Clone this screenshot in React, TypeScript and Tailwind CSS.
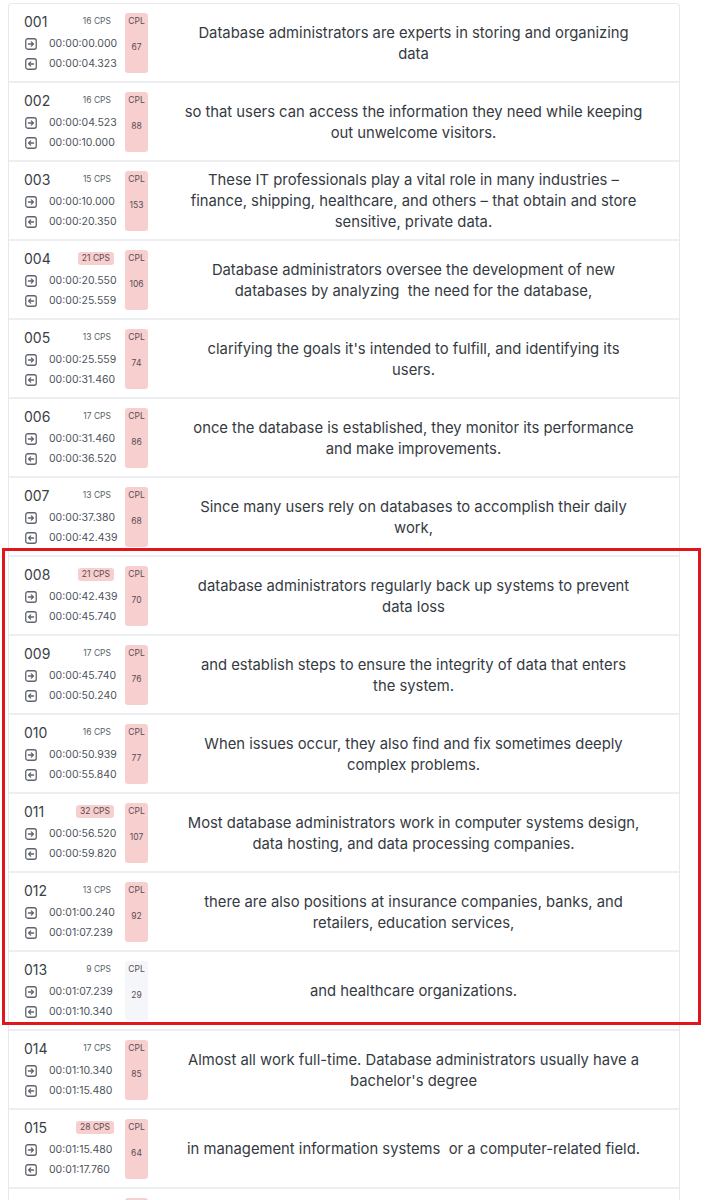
interface Cue {
  id: string
  cps: number
  start: string
  end: string
  cpl: number
  lines: string[]
}

const cues: Cue[] = [
  { id: '001', cps: 16, start: '00:00:00.000', end: '00:00:04.323', cpl: 67, lines: ['Database administrators are experts in storing and organizing', 'data'] },
  { id: '002', cps: 16, start: '00:00:04.523', end: '00:00:10.000', cpl: 88, lines: ['so that users can access the information they need while keeping', 'out unwelcome visitors.'] },
  { id: '003', cps: 15, start: '00:00:10.000', end: '00:00:20.350', cpl: 153, lines: ['These IT professionals play a vital role in many industries –', 'finance, shipping, healthcare, and others – that obtain and store', 'sensitive, private data.'] },
  { id: '004', cps: 21, start: '00:00:20.550', end: '00:00:25.559', cpl: 106, lines: ['Database administrators oversee the development of new', 'databases by analyzing  the need for the database,'] },
  { id: '005', cps: 13, start: '00:00:25.559', end: '00:00:31.460', cpl: 74, lines: ["clarifying the goals it's intended to fulfill, and identifying its", 'users.'] },
  { id: '006', cps: 17, start: '00:00:31.460', end: '00:00:36.520', cpl: 86, lines: ['once the database is established, they monitor its performance', 'and make improvements.'] },
  { id: '007', cps: 13, start: '00:00:37.380', end: '00:00:42.439', cpl: 68, lines: ['Since many users rely on databases to accomplish their daily', 'work,'] },
  { id: '008', cps: 21, start: '00:00:42.439', end: '00:00:45.740', cpl: 70, lines: ['database administrators regularly back up systems to prevent', 'data loss'] },
  { id: '009', cps: 17, start: '00:00:45.740', end: '00:00:50.240', cpl: 76, lines: ['and establish steps to ensure the integrity of data that enters', 'the system.'] },
  { id: '010', cps: 16, start: '00:00:50.939', end: '00:00:55.840', cpl: 77, lines: ['When issues occur, they also find and fix sometimes deeply', 'complex problems.'] },
  { id: '011', cps: 32, start: '00:00:56.520', end: '00:00:59.820', cpl: 107, lines: ['Most database administrators work in computer systems design,', 'data hosting, and data processing companies.'] },
  { id: '012', cps: 13, start: '00:01:00.240', end: '00:01:07.239', cpl: 92, lines: ['there are also positions at insurance companies, banks, and', 'retailers, education services,'] },
  { id: '013', cps: 9, start: '00:01:07.239', end: '00:01:10.340', cpl: 29, lines: ['and healthcare organizations.'] },
  { id: '014', cps: 17, start: '00:01:10.340', end: '00:01:15.480', cpl: 85, lines: ['Almost all work full-time. Database administrators usually have a', "bachelor's degree"] },
  { id: '015', cps: 28, start: '00:01:15.480', end: '00:01:17.760', cpl: 64, lines: ['in management information systems  or a computer-related field.'] },
  { id: '016', cps: 24, start: '00:01:17.760', end: '00:01:21.120', cpl: 81, lines: ['Some employers prefer applicants who have a master’s degree', 'in database administration.'] },
]

// boxed arrow, pointing right (in) or left (out)
function BoxArrow({ dir }: { dir: 'in' | 'out' }) {
  return (
    <svg width="12" height="12" viewBox="0 0 12 12" fill="none" stroke="#5f646c" strokeWidth="1.3" strokeLinecap="round" strokeLinejoin="round" className="shrink-0">
      <rect x="0.75" y="0.75" width="10.5" height="10.5" rx="2" />
      {dir === 'in'
        ? <path d="M3.4 6h5 M6.3 3.9 8.4 6 6.3 8.1" />
        : <path d="M8.6 6h-5 M5.7 3.9 3.6 6l2.1 2.1" />}
    </svg>
  )
}

function CueRow({ cue }: { cue: Cue }) {
  const fastCps = cue.cps > 20
  const longCpl = cue.cpl > 42

  return (
    <div className="flex h-[79px] border-b-2 border-[#eceef1]">
      {/* number, speed, timings */}
      <div className="w-[105px] shrink-0 pl-[15px] pt-[8px]">
        <div className="flex h-[18px] items-center justify-between">
          <span className="text-[14px] text-[#3a3f47]">{cue.id}</span>
          <span
            className={
              fastCps
                ? 'rounded-[3px] bg-[#f7cfcf] px-[4px] py-[1px] text-[8.5px] leading-[11px] text-[#5b4b50]'
                : 'pr-[3px] text-[8.5px] leading-[11px] text-[#5b5f66]'
            }
          >
            {cue.cps} CPS
          </span>
        </div>
        <div className="mt-[4px] flex h-[20px] items-center pl-[1px]">
          <BoxArrow dir="in" />
          <span className="ml-[12px] text-[10.5px] text-[#4d535c]">{cue.start}</span>
        </div>
        <div className="flex h-[20px] items-center pl-[1px]">
          <BoxArrow dir="out" />
          <span className="ml-[12px] text-[10.5px] text-[#4d535c]">{cue.end}</span>
        </div>
      </div>

      {/* characters per line */}
      <div
        className={
          'ml-[11px] mt-[9px] flex h-[60px] w-[23px] shrink-0 flex-col items-center rounded-[3px] pt-[3px] ' +
          (longCpl ? 'bg-[#f7cfcf]' : 'bg-[#f4f6f9]')
        }
      >
        <span className="text-[8.5px] leading-[11px] text-[#5a4d55]">CPL</span>
        <span className="mt-[15px] text-[8.5px] leading-[11px] text-[#5a4d55]">{cue.cpl}</span>
      </div>

      {/* subtitle text */}
      <div className="flex flex-1 flex-col items-center justify-center px-[12px] pt-[2px] text-[14.8px] leading-[21px] text-[#353a42]">
        {cue.lines.map((line, i) => (
          <span key={i} className="whitespace-pre text-center">{line}</span>
        ))}
      </div>
    </div>
  )
}

export default function App() {
  return (
    <div className="relative h-[1200px] overflow-hidden bg-white font-['Inter',sans-serif]">
      <div className="ml-[8px] mt-[3px] w-[672px] rounded-t-[4px] border-x border-t border-[#e6e8eb]">
        {cues.map(cue => (
          <CueRow key={cue.id} cue={cue} />
        ))}
      </div>
      {/* highlight box */}
      <div className="absolute left-[2px] top-[548px] h-[477px] w-[699px] border-[3px] border-[#e2141c]" />
    </div>
  )
}
